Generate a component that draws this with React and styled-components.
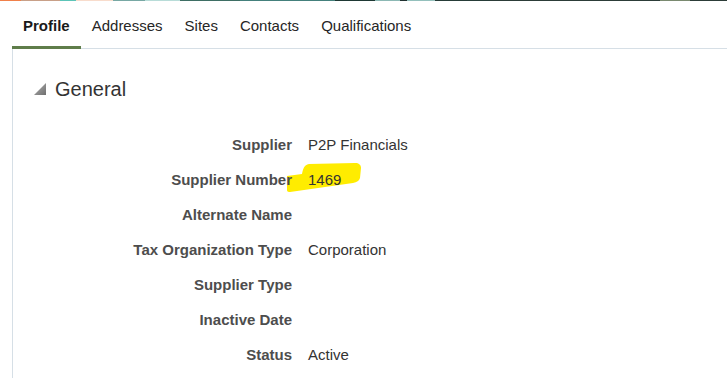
import React from "react";
import styled, { createGlobalStyle } from "styled-components";

const Global = createGlobalStyle`
  html, body { margin: 0; padding: 0; background: #fff; }
  body { font-family: "Liberation Sans", Arial, sans-serif; }
  * { box-sizing: border-box; }
`;

const Page = styled.div`
  width: 727px;
  height: 378px;
  overflow: hidden;
  background: #fff;
`;

const Stripe = styled.div`
  height: 1px;
  background: linear-gradient(
    to right,
    #f0804a 0 21px,
    #c8a088 21px 60px,
    #5cc4b8 60px 76px,
    #f8dccc 76px 113px,
    #78a8a4 113px 145px,
    #b8dcd8 145px 180px,
    #3e6e64 180px 240px,
    #44807c 240px 335px,
    #1e3834 335px 375px,
    #8cb8b4 375px 400px,
    #203030 400px 407px,
    #94c0bc 407px 435px,
    #263c38 435px 490px,
    #2c3c38 490px 660px,
    #7a8a70 660px 690px,
    #2c3c38 690px 727px
  );
`;

const TabBar = styled.nav`
  display: flex;
  margin-left: 12px;
  border-bottom: 1px solid #d6dfe6;
`;

const Tab = styled.div`
  height: 48px;
  margin-bottom: -1px;
  padding: 3px 11px 0;
  display: flex;
  align-items: center;
  font-size: 15px;
  font-weight: ${(p) => (p.$active ? 700 : 400)};
  color: ${(p) => (p.$active ? "#1a1a1a" : "#262626")};
  border-bottom: 3px solid ${(p) => (p.$active ? "#5f7d4a" : "transparent")};
  white-space: nowrap;
`;

const Panel = styled.section`
  margin-left: 12px;
  border-left: 1px solid #d6dfe6;
  height: 330px;
  padding-top: 28px;
`;

const Header = styled.div`
  display: flex;
  align-items: center;
  gap: 9px;
  height: 24px;
  padding-left: 21px;
  font-size: 20px;
  color: #333;
`;

const Disclosure = styled.svg`
  width: 12px;
  height: 12px;
  flex: none;
`;

const Form = styled.div`
  display: grid;
  grid-template-columns: 279px auto;
  grid-auto-rows: 35px;
  column-gap: 16px;
  margin-top: 26px;
  font-size: 15px;
`;

const Label = styled.div`
  position: relative;
  z-index: 1;
  display: flex;
  align-items: center;
  justify-content: flex-end;
  font-weight: 700;
  color: #4d4d4d;
  white-space: nowrap;
`;

const Value = styled.div`
  position: relative;
  display: flex;
  align-items: center;
  color: #333;
  white-space: nowrap;
`;

const ValueText = styled.span`
  position: relative;
`;

const Marker = styled.svg`
  position: absolute;
  left: -21px;
  top: 0;
  width: 75px;
  height: 31px;
`;

const rows = [
  ["Supplier", "P2P Financials"],
  ["Supplier Number", "1469", true],
  ["Alternate Name", ""],
  ["Tax Organization Type", "Corporation"],
  ["Supplier Type", ""],
  ["Inactive Date", ""],
  ["Status", "Active"],
];

const tabs = ["Profile", "Addresses", "Sites", "Contacts", "Qualifications"];

export default function App() {
  return (
    <Page>
      <Global />
      <Stripe />
      <TabBar>
        {tabs.map((t, i) => (
          <Tab key={t} $active={i === 0}>
            {t}
          </Tab>
        ))}
      </TabBar>
      <Panel>
        <Header>
          <Disclosure viewBox="0 0 12 12">
            <defs>
              <linearGradient id="tri" x1="0" y1="0" x2="1" y2="1">
                <stop offset="0" stopColor="#b0b0b0" />
                <stop offset="1" stopColor="#6f6f6f" />
              </linearGradient>
            </defs>
            <polygon points="12,0 12,12 0,12" fill="url(#tri)" />
          </Disclosure>
          General
        </Header>
        <Form>
          {rows.map(([label, value, marked]) => (
            <React.Fragment key={label}>
              <Label>{label}</Label>
              <Value>
                {marked && (
                  <Marker viewBox="0 0 75 31">
                    <path
                      d="M0,14 L15,12 C16,7 17,3 22,2 L68,1 C72,1 74,3 74,6 L73,16 C72,19 70,20 66,21 L3,30 C0,30 0,29 0,27 Z"
                      fill="#ffec00"
                    />
                  </Marker>
                )}
                <ValueText>{value}</ValueText>
              </Value>
            </React.Fragment>
          ))}
        </Form>
      </Panel>
    </Page>
  );
}
